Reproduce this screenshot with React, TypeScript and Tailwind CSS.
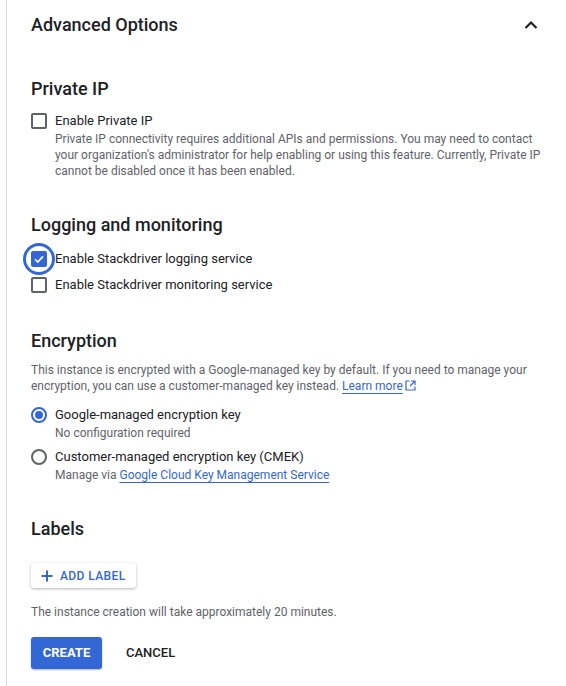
import React from "react";

function Checkbox({ checked = false }: { checked?: boolean }) {
  if (checked) {
    return (
      <span className="relative flex h-4 w-4 shrink-0 items-center justify-center">
        <span className="absolute left-1/2 top-1/2 h-[32px] w-[32px] -translate-x-1/2 -translate-y-1/2 rounded-full border-[3px] border-[#3367d6]" />
        <span className="flex h-4 w-4 items-center justify-center rounded-[2px] bg-[#3367d6]">
          <svg width="12" height="12" viewBox="0 0 12 12" fill="none">
            <path d="M2 6.2 L4.8 9 L10 3.4" stroke="white" strokeWidth="1.6" />
          </svg>
        </span>
      </span>
    );
  }
  return <span className="h-4 w-4 shrink-0 rounded-[2px] border-2 border-[#5f6368]" />;
}

function Radio({ checked = false }: { checked?: boolean }) {
  return (
    <span
      className={
        checked
          ? "flex h-4 w-4 shrink-0 items-center justify-center rounded-full border-2 border-[#3367d6]"
          : "flex h-4 w-4 shrink-0 items-center justify-center rounded-full border-2 border-[#5f6368]"
      }
    >
      {checked && <span className="h-2 w-2 rounded-full bg-[#3367d6]" />}
    </span>
  );
}

function ExternalIcon() {
  return (
    <svg width="11" height="11" viewBox="0 0 11 11" fill="none" className="ml-[2px] inline-block align-[-1px]">
      <path d="M4.5 1H1v9h9V6.5" stroke="#3367d6" strokeWidth="1.2" />
      <path d="M6 1h4v4M10 1L5 6" stroke="#3367d6" strokeWidth="1.2" />
    </svg>
  );
}

export default function App() {
  return (
    <div className="min-h-[686px] bg-white font-['Roboto',sans-serif] text-[#202124]">
      <div className="ml-[6px] min-h-[686px] border-l border-[#dadce0] pl-[24px] pr-[20px]">
        {/* Title */}
        <div className="flex items-center justify-between pt-[13px]">
          <h1 className="text-[18px] leading-[24px] font-medium">Advanced Options</h1>
          <svg width="16" height="16" viewBox="0 0 16 16" fill="none" className="mr-[7px]">
            <path d="M2.5 11 L8 5.5 L13.5 11" stroke="#202124" strokeWidth="2.2" />
          </svg>
        </div>

        {/* Private IP */}
        <h2 className="mt-[40px] text-[18px] leading-[24px] font-medium">Private IP</h2>
        <div className="mt-[10px] flex items-center gap-[8px]">
          <Checkbox />
          <span className="text-[13px] leading-[20px]">Enable Private IP</span>
        </div>
        <p className="pl-[24px] text-[12px] leading-[16px] text-[#5f6368]">
          Private IP connectivity requires additional APIs and permissions. You may need to contact your
          organization's administrator for help enabling or using this feature. Currently, Private IP
          cannot be disabled once it has been enabled.
        </p>

        {/* Logging */}
        <h2 className="mt-[34px] text-[18px] leading-[24px] font-medium">Logging and monitoring</h2>
        <div className="mt-[12px] flex items-center gap-[8px]">
          <Checkbox checked />
          <span className="text-[13px] leading-[20px]">Enable Stackdriver logging service</span>
        </div>
        <div className="mt-[6px] flex items-center gap-[8px]">
          <Checkbox />
          <span className="text-[13px] leading-[20px]">Enable Stackdriver monitoring service</span>
        </div>

        {/* Encryption */}
        <h2 className="mt-[34px] text-[18px] leading-[24px] font-medium">Encryption</h2>
        <p className="mt-[9px] pr-[6px] text-[12px] leading-[16px] text-[#5f6368]">
          This instance is encrypted with a Google-managed key by default. If you need to manage your
          encryption, you can use a customer-managed key instead.{" "}
          <span className="text-[#3367d6] underline decoration-[#3367d6] underline-offset-[3px]">Learn more</span>
          <ExternalIcon />
        </p>
        <div className="mt-[11px] flex items-center gap-[8px]">
          <Radio checked />
          <span className="text-[13px] leading-[20px]">Google-managed encryption key</span>
        </div>
        <p className="pl-[24px] text-[12px] leading-[16px] text-[#5f6368]">No configuration required</p>
        <div className="mt-[6px] flex items-center gap-[8px]">
          <Radio />
          <span className="text-[13px] leading-[20px]">Customer-managed encryption key (CMEK)</span>
        </div>
        <p className="pl-[24px] text-[12px] leading-[16px] text-[#5f6368]">
          Manage via{" "}
          <span className="text-[#3367d6] underline decoration-[#3367d6] underline-offset-[3px]">
            Google Cloud Key Management Service
          </span>
        </p>

        {/* Labels */}
        <h2 className="mt-[34px] text-[18px] leading-[24px] font-medium">Labels</h2>
        <button className="mt-[22px] flex h-[25px] w-[105px] items-center gap-[7px] rounded-[3px] bg-white pl-[10px] text-[12px] font-medium tracking-[0.4px] text-[#3367d6] shadow-[0_1px_3px_rgba(0,0,0,0.3)]">
          <svg width="12" height="12" viewBox="0 0 12 12" fill="none">
            <path d="M6 0.5V11.5M0.5 6H11.5" stroke="#3367d6" strokeWidth="2" />
          </svg>
          ADD LABEL
        </button>
        <p className="mt-[16px] text-[12px] leading-[16px] text-[#5f6368]">
          The instance creation will take approximately 20 minutes.
        </p>
        <div className="mt-[17px] flex items-center">
          <button className="flex h-[32px] w-[71px] items-center justify-center rounded-[3px] bg-[#3367d6] text-[13px] font-bold text-white shadow-[0_1px_2px_rgba(0,0,0,0.3)]">
            CREATE
          </button>
          <button className="ml-[24px] text-[13px] font-medium text-[#202124]">CANCEL</button>
        </div>
      </div>
    </div>
  );
}
